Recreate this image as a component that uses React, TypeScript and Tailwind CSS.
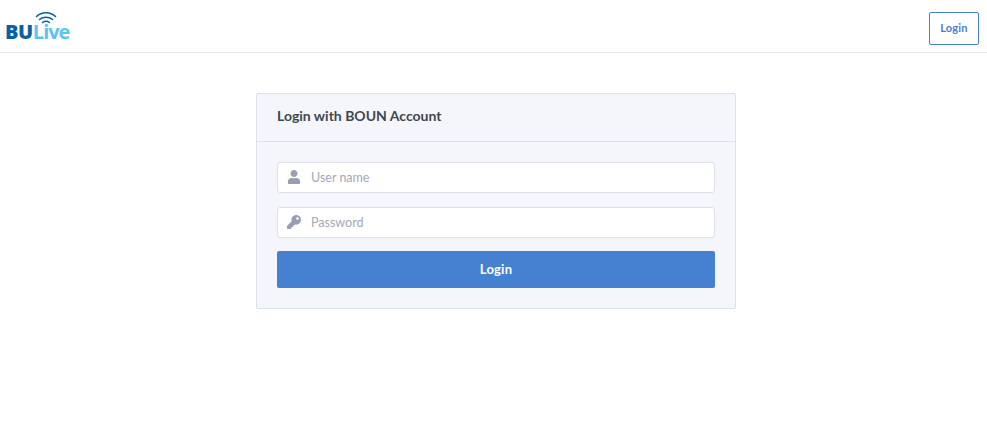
import React from "react";
import { FaUser, FaKey } from "react-icons/fa";

const Logo = () => (
  <div className="relative w-[70px] h-[52px]">
    <svg className="absolute left-[35px] top-[11px]" width="22" height="14" viewBox="0 0 22 14" fill="none" strokeLinecap="round">
      <path d="M1.5 5.5C6.5 0.5 15.5 0.5 20.5 5.5" stroke="#0f5f9e" strokeWidth="1.6" />
      <path d="M4.5 8.5C8 5.5 14 5.5 17.5 8.5" stroke="#0f5f9e" strokeWidth="1.6" />
      <path d="M7.5 11.5C9.5 10 12.5 10 14.5 11.5" stroke="#0f5f9e" strokeWidth="1.5" />
    </svg>
    <div className="absolute left-[5px] top-[19px] text-[20px] leading-[26px] font-extrabold font-['Open_Sans',sans-serif] whitespace-nowrap tracking-[-0.4px]">
      <span className="text-[#0f5f9e]">BU</span>
      <span className="text-[#5cc4f0] font-bold tracking-[-1px]">Live</span>
    </div>
  </div>
);

const Field = ({ icon, placeholder }: { icon: React.ReactNode; placeholder: string }) => (
  <div className="flex items-center h-[31px] bg-white border border-[#dde0ea] rounded-[3px]">
    <span className="w-[33px] flex justify-center pb-[2px] pr-[2px] text-[#9a9fae] text-[14px]">{icon}</span>
    <span className="pt-[1px] text-[12.5px] text-[#a3a8b5]">{placeholder}</span>
  </div>
);

export default function App() {
  return (
    <div className="h-[440px] bg-white font-['Lato',sans-serif]">
      <nav className="flex items-start justify-between h-[53px] border-b border-[#e2e5ec] pr-2">
        <Logo />
        <button className="mt-3 w-[50px] h-[33px] border border-[#4680d1] rounded-[2px] text-[11px] font-bold tracking-[0.2px] text-[#4680d1] bg-white">
          Login
        </button>
      </nav>
      <div className="flex justify-center pt-[40px] pl-[5px]">
        <div className="w-[480px] bg-[#f4f6fb] border border-[#dde0ea] rounded-[2px]">
          <div className="h-[48px] flex items-center px-5 pb-[5px] border-b border-[#dde0ea] text-[14px] font-bold text-[#3d4852]">
            Login with BOUN Account
          </div>
          <div className="px-5 pt-5 pb-5">
            <Field icon={<FaUser />} placeholder="User name" />
            <div className="mt-[14px]">
              <Field icon={<FaKey />} placeholder="Password" />
            </div>
            <button className="mt-[13px] w-full h-[37px] bg-[#4680d1] rounded-[2px] text-white text-[13px] font-bold tracking-[0.2px]">
              Login
            </button>
          </div>
        </div>
      </div>
    </div>
  );
}
